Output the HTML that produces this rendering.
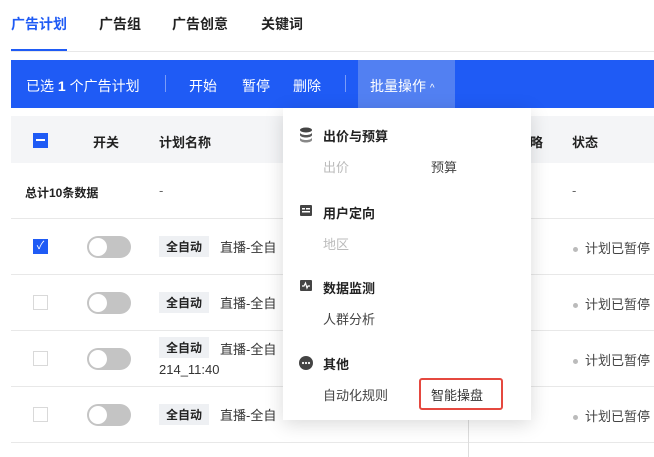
<!DOCTYPE html>
<html><head><meta charset="utf-8"><style>
*{margin:0;padding:0;box-sizing:border-box}
body{width:654px;height:457px;overflow:hidden;background:#fff;font-family:"Liberation Sans","Noto Sans CJK SC",sans-serif;font-size:13px;color:#333;position:relative}
.a{position:absolute;white-space:nowrap}
.tab{top:14px;font-size:14px;font-weight:bold;color:#222}
.row{position:absolute;left:11px;right:0;height:56px;border-bottom:1px solid #e8e8e8}
.cb{position:absolute;left:22px;width:15px;height:15px;border:1px solid #d9d9d9;background:#fff}
.tg{position:absolute;left:76px;width:44px;height:22px;border-radius:11px;background:#c4c4c4}
.tg:after{content:"";position:absolute;left:2px;top:2px;width:18px;height:18px;border-radius:50%;background:#fff}
.tag{position:absolute;left:148px;background:#eef0f3;padding:2px 7px;font-size:12px;font-weight:bold;color:#222}
.st{position:absolute;left:562px;color:#444}
.st:before{content:"";display:inline-block;width:5px;height:5px;border-radius:50%;background:#bbb;margin-right:7px;vertical-align:middle}
.dd{position:absolute;left:283px;top:108px;width:248px;height:312px;background:#fff;box-shadow:0 4px 18px rgba(0,0,0,.15)}
.h{position:absolute;left:40px;font-weight:bold;color:#222}
.i{position:absolute;color:#444}
</style></head><body>
<div class="a tab" style="left:11px;color:#1f5bf5">广告计划</div>
<div class="a tab" style="left:99px">广告组</div>
<div class="a tab" style="left:172px">广告创意</div>
<div class="a tab" style="left:261px">关键词</div>
<div class="a" style="left:11px;top:49px;width:56px;height:3px;background:#1f5bf5"></div>
<div class="a" style="left:11px;top:51px;right:0;height:1px;background:#e8e8e8"></div>
<div class="a" style="left:11px;top:60px;right:0;height:48px;background:#1f5bf5"></div>
<div class="a" style="left:358px;top:60px;width:97px;height:48px;background:#5280f2"></div>
<div class="a" style="left:26px;top:76px;color:#fff;font-size:14px">已选 <b>1</b> 个广告计划</div>
<div class="a" style="left:165px;top:75px;width:1px;height:17px;background:#7a9cf8"></div>
<div class="a" style="left:189px;top:76px;color:#fff;font-size:14px">开始</div>
<div class="a" style="left:242px;top:76px;color:#fff;font-size:14px">暂停</div>
<div class="a" style="left:293px;top:76px;color:#fff;font-size:14px">删除</div>
<div class="a" style="left:345px;top:75px;width:1px;height:17px;background:#7a9cf8"></div>
<div class="a" style="left:370px;top:76px;color:#fff;font-size:14px">批量操作 <span style="font-size:10px">^</span></div>
<div class="a" style="left:11px;top:116px;right:0;height:47px;background:#f4f5f7"></div>
<div class="a" style="left:33px;top:133px;width:15px;height:15px;background:#1f5bf5"><div style="position:absolute;left:3px;top:6px;width:9px;height:2px;background:#fff"></div></div>
<div class="a" style="left:93px;top:132px;font-weight:bold;color:#222">开关</div>
<div class="a" style="left:159px;top:132px;font-weight:bold;color:#222">计划名称</div>
<div class="a" style="left:530px;top:132px;font-weight:bold;color:#222">略</div>
<div class="a" style="left:572px;top:132px;font-weight:bold;color:#222">状态</div>
<div class="row" style="top:163px"><div class="a" style="left:14px;top:21px;font-size:12px;font-weight:bold;color:#222">总计10条数据</div><div class="a" style="left:148px;top:20px;color:#666">-</div><div class="a" style="left:561px;top:20px;color:#666">-</div></div>
<div class="row" style="top:219px"><div class="cb" style="top:20px;background:#1f5bf5;border-color:#1f5bf5;color:#fff;font-size:11px;text-align:center;line-height:13px">✓</div><div class="tg" style="top:17px"></div><div class="tag" style="top:17px">全自动</div><div class="a" style="left:209px;top:18px">直播-全自</div><div class="st" style="top:19px">计划已暂停</div></div>
<div class="row" style="top:275px"><div class="cb" style="top:20px"></div><div class="tg" style="top:17px"></div><div class="tag" style="top:17px">全自动</div><div class="a" style="left:209px;top:18px">直播-全自</div><div class="st" style="top:19px">计划已暂停</div></div>
<div class="row" style="top:331px"><div class="cb" style="top:20px"></div><div class="tg" style="top:17px"></div><div class="tag" style="top:6px">全自动</div><div class="a" style="left:209px;top:8px">直播-全自</div><div class="a" style="left:148px;top:31px">214_11:40</div><div class="st" style="top:19px">计划已暂停</div></div>
<div class="row" style="top:387px"><div class="cb" style="top:20px"></div><div class="tg" style="top:17px"></div><div class="tag" style="top:17px">全自动</div><div class="a" style="left:209px;top:18px">直播-全自</div><div class="st" style="top:19px">计划已暂停</div></div>
<div class="a" style="left:468px;top:420px;width:1px;height:37px;background:#ddd"></div>
<div class="dd">
<svg class="a" style="left:16px;top:19px" width="14" height="16" viewBox="0 0 14 16"><ellipse cx="7" cy="3" rx="6" ry="2.5" fill="#444"/><path d="M1 5.5c0 1.4 2.7 2.5 6 2.5s6-1.1 6-2.5v2.5c0 1.4-2.7 2.5-6 2.5S1 9.4 1 8z" fill="#555"/><path d="M1 10.5c0 1.4 2.7 2.5 6 2.5s6-1.1 6-2.5v2.5c0 1.4-2.7 2.5-6 2.5S1 14.4 1 13z" fill="#888"/></svg>
<div class="h" style="top:18px">出价与预算</div>
<div class="i" style="left:40px;top:49px;color:#bbb">出价</div>
<div class="i" style="left:148px;top:49px">预算</div>
<svg class="a" style="left:17px;top:97px" width="12" height="12"><rect width="12" height="11" rx="1" fill="#444"/><rect x="2" y="3" width="3" height="1.5" fill="#fff"/><rect x="6" y="3" width="4" height="1.5" fill="#fff"/><rect x="2" y="6" width="8" height="1.5" fill="#fff"/></svg>
<div class="h" style="top:95px">用户定向</div>
<div class="i" style="left:40px;top:126px;color:#bbb">地区</div>
<svg class="a" style="left:17px;top:172px" width="12" height="12"><rect width="12" height="11" rx="1" fill="#444"/><path d="M2 6h2l1.5-3 1.5 5 1-2h2" stroke="#fff" stroke-width="1.2" fill="none"/></svg>
<div class="h" style="top:170px">数据监测</div>
<div class="i" style="left:40px;top:201px">人群分析</div>
<svg class="a" style="left:16px;top:248px" width="14" height="14"><circle cx="7" cy="7" r="7" fill="#444"/><circle cx="4" cy="7" r="1.1" fill="#fff"/><circle cx="7" cy="7" r="1.1" fill="#fff"/><circle cx="10" cy="7" r="1.1" fill="#fff"/></svg>
<div class="h" style="top:246px">其他</div>
<div class="i" style="left:40px;top:277px">自动化规则</div>
<div class="a" style="left:136px;top:270px;width:84px;height:32px;border:2px solid #e5483f;border-radius:3px"></div>
<div class="i" style="left:148px;top:277px;color:#333">智能操盘</div>
</div>
</body></html>
